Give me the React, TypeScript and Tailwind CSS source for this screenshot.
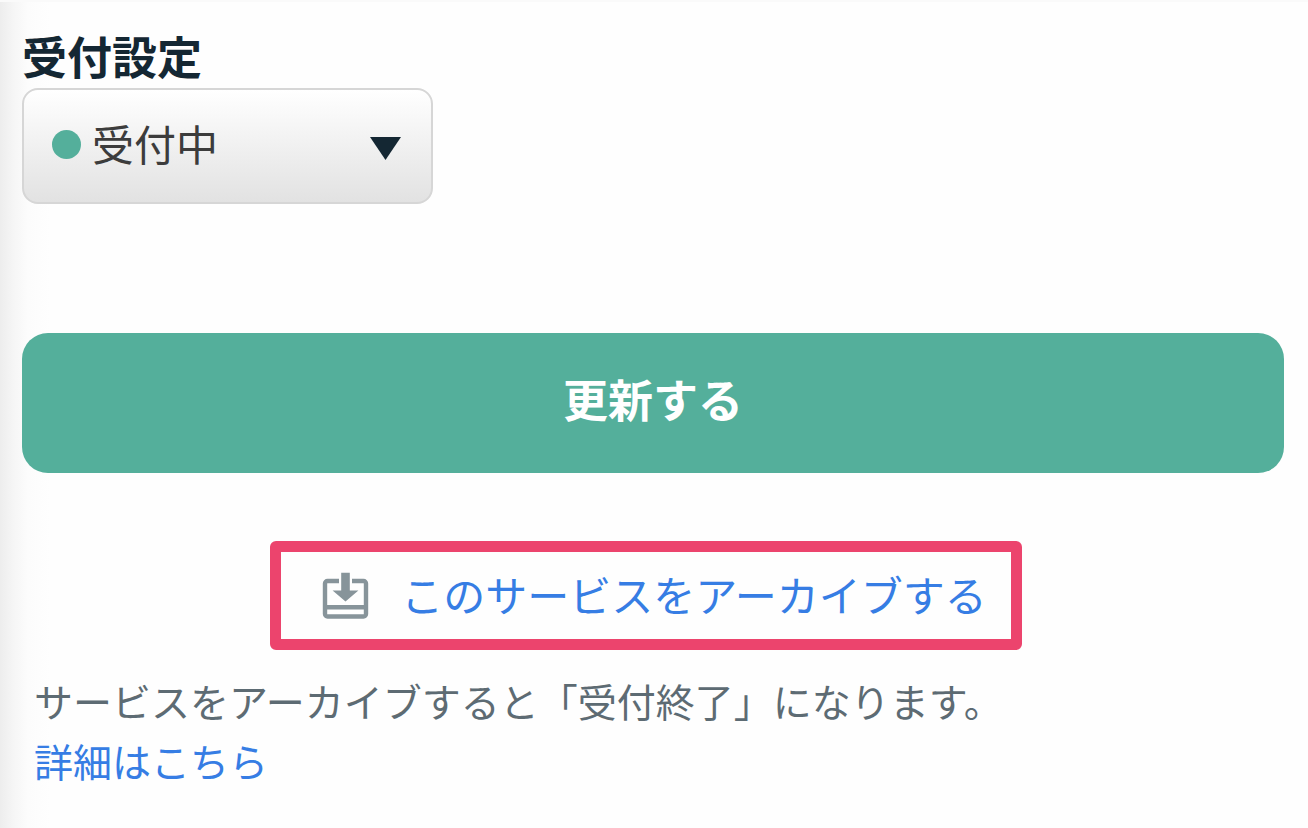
import { useState } from 'react'

function ArchiveIcon() {
  return (
    <svg viewBox="0 0 48 48" className="size-12 shrink-0 text-[#87949a]" aria-hidden="true">
      <path
        d="M18 9H6.5A2.5 2.5 0 0 0 4 11.5V42A2.5 2.5 0 0 0 6.5 44.5h36A2.5 2.5 0 0 0 45 42V11.5A2.5 2.5 0 0 0 42.5 9H31M4 35.2h41"
        fill="none"
        stroke="currentColor"
        strokeWidth="4.4"
      />
      <path d="M20.2 .8h8.6V18.4h8.6L24.5 29.6 11.6 18.4h8.6z" fill="currentColor" />
    </svg>
  )
}

export default function App() {
  const [status, setStatus] = useState('open')

  return (
    <main
      lang="ja"
      className="min-h-screen border-t-2 border-[#fafafa] bg-[#fefefe] bg-[linear-gradient(to_right,#ededed,#f6f6f6_14px,#fcfcfc_28px,#fefefe_50px)] pt-[26px] pr-6 pb-8 pl-[22px] font-['Noto_Sans_CJK_JP',sans-serif]"
    >
      <label htmlFor="status" className="block text-[45px] leading-[56px] font-bold text-[#142733]">
        受付設定
      </label>
      <div className="relative mt-1 w-[411px]">
        <select
          id="status"
          value={status}
          onChange={(e) => setStatus(e.target.value)}
          className="block h-[116px] w-full appearance-none rounded-2xl border-2 border-[#d6d6d6] bg-linear-to-b from-white to-[#e2e2e2] pr-20 pb-2 pl-[68px] text-[42px] text-[#3c3c3c]"
        >
          <option value="open">受付中</option>
          <option value="closed">受付終了</option>
        </select>
        <span
          className={`pointer-events-none absolute top-[42px] left-[30px] size-[29px] rounded-full ${
            status === 'open' ? 'bg-[#54af9b]' : 'bg-[#87949a]'
          }`}
        />
        <svg
          viewBox="0 0 31 23"
          className="pointer-events-none absolute top-[49px] right-8 w-[31px] text-[#142733]"
          aria-hidden="true"
        >
          <path d="M0 0h31L15.5 23z" fill="currentColor" />
        </svg>
      </div>

      <button
        type="button"
        className="mt-[129px] block h-[140px] w-full rounded-[26px] bg-[#54af9b] pb-2 text-[45px] font-bold text-white"
      >
        更新する
      </button>

      <div className="mt-[68px] pr-[26px] pl-3">
        <div className="mx-auto flex h-[109px] w-fit items-center gap-8 rounded-md border-[11px] border-[#ec446d] pr-6 pl-10">
          <ArchiveIcon />
          <a href="#archive" className="pb-1 text-[42px] leading-[60px] text-[#367de4]">
            このサービスをアーカイブする
          </a>
        </div>
        <p className="mt-5 text-[39px] leading-[60px] text-[#5d6b73]">
          サービスをアーカイブすると「受付終了」になります。
          <a href="#help" className="block w-fit text-[#367de4]">
            詳細はこちら
          </a>
        </p>
      </div>
    </main>
  )
}
